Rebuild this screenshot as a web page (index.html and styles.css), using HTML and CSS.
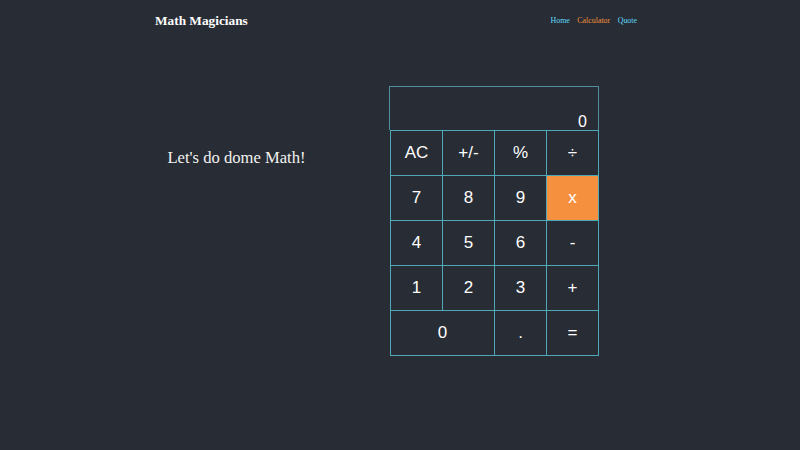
FILE: index.html
```html
<!DOCTYPE html>
<html lang="en">
<head>
<meta charset="utf-8">
<title>Math Magicians</title>
<link rel="stylesheet" href="styles.css">
</head>
<body>
<header class="topbar">
  <h1 class="brand">Math Magicians</h1>
  <nav class="nav">
    <a class="nav-link" href="#">Home</a>
    <a class="nav-link active" href="#">Calculator</a>
    <a class="nav-link" href="#">Quote</a>
  </nav>
</header>
<main class="page">
  <h2 class="intro">Let's do dome Math!</h2>
  <div class="calculator">
    <div class="display">0</div>
    <div class="keys">
      <button class="key">AC</button>
      <button class="key">+/-</button>
      <button class="key">%</button>
      <button class="key">÷</button>
      <button class="key">7</button>
      <button class="key">8</button>
      <button class="key">9</button>
      <button class="key op">x</button>
      <button class="key">4</button>
      <button class="key">5</button>
      <button class="key">6</button>
      <button class="key">-</button>
      <button class="key">1</button>
      <button class="key">2</button>
      <button class="key">3</button>
      <button class="key">+</button>
      <button class="key wide">0</button>
      <button class="key">.</button>
      <button class="key">=</button>
    </div>
  </div>
</main>
</body>
</html>
```
FILE: styles.css
```css
html, body {
  margin: 0;
  padding: 0;
}
body {
  background: #282c34;
  color: #ffffff;
  font-family: "Liberation Serif", "Times New Roman", serif;
  min-height: 450px;
}
.topbar {
  display: flex;
  align-items: baseline;
  justify-content: space-between;
  padding: 13px 163px 0 155px;
  height: 27px;
}
.brand {
  margin: 0;
  font-size: 13.3px;
  font-weight: bold;
  color: #ffffff;
}
.nav {
  display: flex;
  gap: 7.5px;
  position: relative;
  top: -2px;
}
.nav-link {
  font-size: 7.9px;
  color: #61dafb;
  text-decoration: none;
}
.nav-link.active {
  color: #f5913e;
}
.page {
  display: flex;
  align-items: flex-start;
  padding: 46px 0 0 155px;
  gap: 72px;
}
.intro {
  width: 163px;
  margin: 62px 0 0;
  text-align: center;
  font-size: 16.6px;
  font-weight: normal;
  color: #f2f2f2;
}
.calculator {
  width: 210px;
  margin-left: -1px;
}
.display {
  height: 44px;
  border: 1px solid #4f8e9a;
  border-bottom: none;
  box-sizing: border-box;
  padding: 0 11px 0 0;
  display: flex;
  align-items: flex-end;
  justify-content: flex-end;
  font-family: "Liberation Sans", Arial, sans-serif;
  font-size: 16px;
  line-height: 1;
}
.keys {
  display: grid;
  grid-template-columns: repeat(4, 52px);
  grid-auto-rows: 45px;
  margin-left: 1px;
  border-top: 1px solid #4fa8b8;
  border-left: 1px solid #4fa8b8;
  width: 209px;
  box-sizing: border-box;
}
.key {
  background: transparent;
  border: none;
  border-right: 1px solid #4fa8b8;
  border-bottom: 1px solid #4fa8b8;
  color: #ffffff;
  font-family: "Liberation Sans", Arial, sans-serif;
  font-size: 17px;
  padding: 0;
  margin: 0;
}
.key.op {
  background: #f5913e;
}
.key.wide {
  grid-column: span 2;
}
```
